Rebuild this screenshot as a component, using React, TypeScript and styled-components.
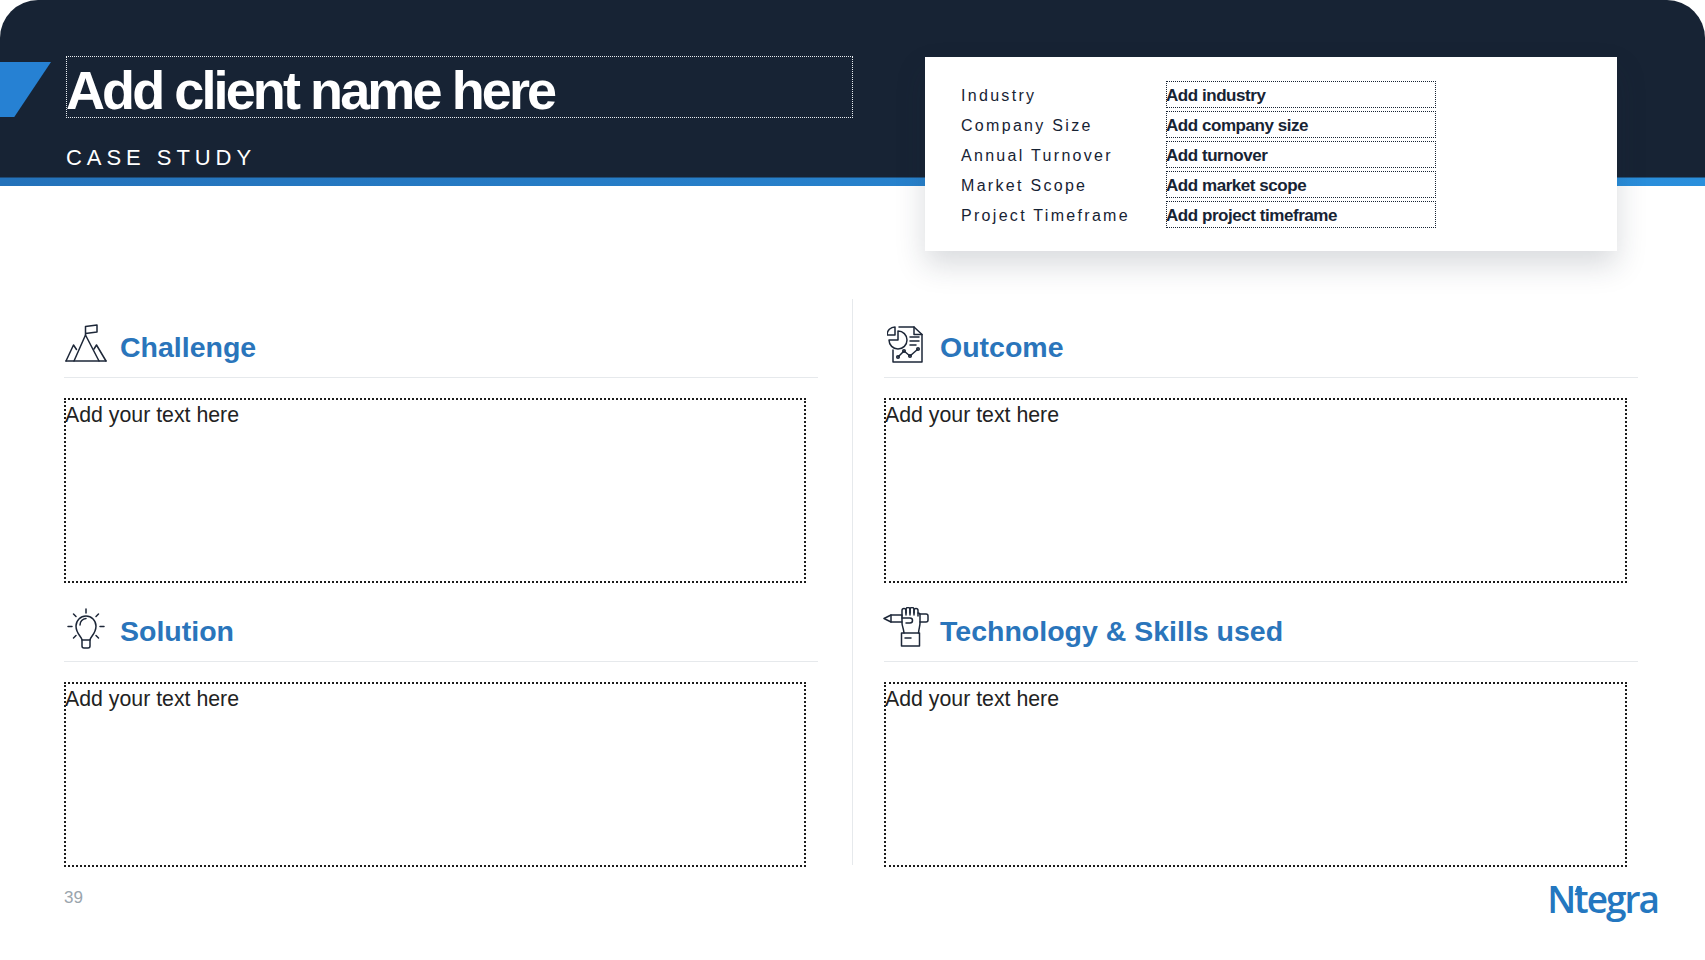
import * as React from 'react';
import styled, { createGlobalStyle } from 'styled-components';

const GlobalStyle = createGlobalStyle`
  html, body {
    margin: 0;
    padding: 0;
    background: #fff;
  }
  * {
    box-sizing: border-box;
  }
`;

const Page = styled.div`
  display: flex;
  flex-direction: column;
  width: 1705px;
  height: 960px;
  overflow: hidden;
  background: #fff;
  color: #172334;
  font-family: 'Liberation Sans', Arial, sans-serif;
`;

// dark band and the blue stripe under it are one element
const Header = styled.header`
  display: flex;
  align-items: flex-start;
  flex: none;
  height: 186px;
  padding-top: 56px;
  border-radius: 38px 38px 0 0;
  background:
    linear-gradient(#172334, #172334) top / 100% 177.500px no-repeat,
    linear-gradient(90deg, #2472ba, #2a8fdc);
`;

const TitleColumn = styled.div`
  display: flex;
  flex-direction: column;
  flex: none;
  width: 853px;
`;

const TitleRow = styled.div`
  display: flex;
  gap: 16px;
`;

const Wedge = styled.div`
  flex: none;
  width: 51px;
  height: 55px;
  margin-top: 6px;
  background: #2681d3;
  clip-path: polygon(0 0, 100% 0, 28% 100%, 0 100%);
`;

const TitleBox = styled.div`
  flex: 1;
  height: 62px;
  margin-left: -1px;
  border: 1px dotted #e8ecf0;
`;

const Title = styled.h1`
  margin: 0 0 0 -1px;
  color: #fff;
  font-size: 54px;
  font-weight: 700;
  line-height: 66px;
  letter-spacing: -2.900px;
  white-space: nowrap;
`;

const Subtitle = styled.div`
  margin: 27px 0 0 66px;
  color: #fff;
  font-size: 22px;
  line-height: 26px;
  letter-spacing: 4.950px;
`;

const InfoCard = styled.aside`
  display: flex;
  flex-direction: column;
  flex: none;
  gap: 3px;
  width: 692px;
  height: 194px;
  margin: 1px 0 0 72px;
  padding: 24px 36px;
  background: #fff;
  box-shadow: 0 14px 28px rgba(30, 40, 60, 0.17);
`;

const InfoRow = styled.div`
  display: grid;
  grid-template-columns: 205px 270px;
  align-items: center;
  height: 27px;
`;

const InfoLabel = styled.span`
  padding-top: 2px;
  font-size: 16px;
  letter-spacing: 2.300px;
  white-space: nowrap;
`;

const InfoValue = styled.span`
  height: 27px;
  border: 1px dotted #172334;
  font-size: 17px;
  font-weight: 700;
  line-height: 27px;
  letter-spacing: -0.450px;
  text-indent: -1px;
  white-space: nowrap;
`;

const Main = styled.main`
  display: grid;
  grid-template-columns: 788px 32px 754px;
  align-items: start;
  margin-top: 113px;
  padding-left: 64px;
`;

const Column = styled.div`
  display: flex;
  flex-direction: column;
`;

const Divider = styled.div`
  width: 1px;
  height: 566px;
  background: #e6e9ec;
`;

const Section = styled.section`
  display: flex;
  flex-direction: column;
  width: 754px;
`;

const SectionHeading = styled.div`
  display: flex;
  align-items: flex-end;
  height: 79px;
  margin-bottom: 20px;
  padding-bottom: 12px;
  border-bottom: 1px solid #e6e9ec;
`;

// lift and offset place each icon on the heading line, the drawings differ in size
const IconSlot = styled.div<{ $lift: number; $offset: number }>`
  display: flex;
  align-items: flex-end;
  flex: none;
  width: 56px;
  height: 44px;
  padding-bottom: ${props => props.$lift}px;
  padding-left: ${props => Math.max(props.$offset, 0)}px;
  margin-left: ${props => Math.min(props.$offset, 0)}px;
  margin-right: ${props => -Math.min(props.$offset, 0)}px;
`;

const SectionTitle = styled.h2`
  margin: 0;
  color: #2a75bb;
  font-size: 28.500px;
  font-weight: 700;
  line-height: 36px;
  white-space: nowrap;
`;

const TextBox = styled.div<{ $wide?: boolean }>`
  width: ${props => (props.$wide ? '743px' : '742px')};
  height: 185px;
  border: 2px dotted #1c1c1c;
  color: #222;
  font-size: 21.300px;
  line-height: 30px;
  text-indent: -1px;
`;

const Footer = styled.footer`
  display: flex;
  align-items: flex-start;
  justify-content: space-between;
  margin-top: 13px;
  padding: 0 47px 0 64px;
`;

const PageNumber = styled.span`
  margin-top: 8px;
  color: #9aa5ad;
  font-size: 17px;
  line-height: 20px;
`;

const Logo = styled.div`
  position: relative;
  color: #2477c0;
  font-family: 'Open Sans', 'Liberation Sans', sans-serif;
  font-size: 37px;
  font-weight: 600;
  line-height: 38px;
  letter-spacing: -2px;

  &::after {
    content: '';
    position: absolute;
    top: 6px;
    left: 29px;
    width: 4px;
    height: 6px;
    background: #2477c0;
    transform: skewX(-20deg);
  }
`;

const IconLine = styled.svg.attrs({
  fill: 'none',
  stroke: '#1d2738',
  strokeWidth: 1.5,
  strokeLinecap: 'round',
  strokeLinejoin: 'round',
})``;

function MountainIcon() {
  return (
    <IconLine width="42" height="38" viewBox="0 0 42 38">
      <path d="M1 37h40" />
      <path d="M9 37 20.500 11 34 37" />
      <path d="M1 37 8.500 21l3 4.500" />
      <path d="M29 25l2.500-4L41 37" />
      <path d="M20.500 11V2.500L32 1v7l-11.500 1.500" />
    </IconLine>
  );
}

function ReportIcon() {
  return (
    <IconLine width="36" height="37" viewBox="0 0 36 37">
      <path d="M12 1h15l8 7.500V36H6V24" />
      <path d="M27 1v7.500h8" />
      <path d="M11 5a9 9 0 1 1-9 9h9z" />
      <path d="M8 1a8 8 0 0 0-8 8h8z" />
      <path d="M23 11h9M23 15h9M23 19h6" />
      <path d="M11 31l6-6 6 5 8-7" />
      <circle cx="11" cy="31" r="1.300" />
      <circle cx="17" cy="25" r="1.300" />
      <circle cx="23" cy="30" r="1.300" />
      <circle cx="31" cy="23" r="1.300" />
    </IconLine>
  );
}

function BulbIcon() {
  return (
    <IconLine width="38" height="41" viewBox="0 0 38 41">
      <path d="M19 1v4M1 18.500h4M33 18.500h4M6.500 6l2.500 2.500M31.500 6 29 8.500M6.500 30l2.500-2.500M31.500 30 29 27.500" />
      <path d="M15 32c0-3-6-6-6-14a10 10 0 0 1 20 0c0 8-6 11-6 14z" />
      <path d="M13 17a6.500 6.500 0 0 1 6-6.500" />
      <path d="M15 32v6a2 2 0 0 0 2 2h4a2 2 0 0 0 2-2v-6" />
    </IconLine>
  );
}

function HandPenIcon() {
  return (
    <IconLine width="46" height="40" viewBox="0 0 46 40" strokeWidth="1.700">
      <path d="M19 8H8L1 11.500 8 15h11" />
      <path d="M8 8v7" />
      <path d="M37 7h6a2 2 0 0 1 2 2v4a2 2 0 0 1-2 2h-6" />
      <path d="M19 9V3.500a2 2 0 0 1 4 0V8" />
      <path d="M23 6V2.500a2 2 0 0 1 4 0V8" />
      <path d="M27 6V2.500a2 2 0 0 1 4 0V8" />
      <path d="M31 6V3.500a2 2 0 0 1 4 0V9" />
      <path d="M35 6a2 2 0 0 1 2 2v8c0 3-1 5-1.500 10" />
      <path d="M19 9v7c0 3 1.500 5 2 10" />
      <path d="M19 11h8a2 2 0 0 1 0 5h-4" />
      <path d="M18.500 26h18v13h-18z" />
      <path d="M22 31h6" />
    </IconLine>
  );
}

const infoRows = [
  { label: 'Industry', value: 'Add industry' },
  { label: 'Company Size', value: 'Add company size' },
  { label: 'Annual Turnover', value: 'Add turnover' },
  { label: 'Market Scope', value: 'Add market scope' },
  { label: 'Project Timeframe', value: 'Add project timeframe' },
];

function CaseSection({
  icon,
  title,
  lift,
  offset,
  wide,
}: {
  icon: React.ReactNode;
  title: string;
  lift: number;
  offset: number;
  wide?: boolean;
}) {
  return (
    <Section>
      <SectionHeading>
        <IconSlot $lift={lift} $offset={offset}>
          {icon}
        </IconSlot>
        <SectionTitle>{title}</SectionTitle>
      </SectionHeading>
      <TextBox $wide={wide}>Add your text here</TextBox>
    </Section>
  );
}

export default function App() {
  return (
    <Page>
      <GlobalStyle />
      <Header>
        <TitleColumn>
          <TitleRow>
            <Wedge />
            <TitleBox>
              <Title>Add client name here</Title>
            </TitleBox>
          </TitleRow>
          <Subtitle>CASE STUDY</Subtitle>
        </TitleColumn>
        <InfoCard>
          {infoRows.map(row => (
            <InfoRow key={row.label}>
              <InfoLabel>{row.label}</InfoLabel>
              <InfoValue>{row.value}</InfoValue>
            </InfoRow>
          ))}
        </InfoCard>
      </Header>
      <Main>
        <Column>
          <CaseSection icon={<MountainIcon />} title="Challenge" lift={3} offset={1} />
          <CaseSection icon={<BulbIcon />} title="Solution" lift={0} offset={3} />
        </Column>
        <Divider />
        <Column>
          <CaseSection icon={<ReportIcon />} title="Outcome" lift={2} offset={3} wide />
          <CaseSection icon={<HandPenIcon />} title="Technology & Skills used" lift={2} offset={-1} wide />
        </Column>
      </Main>
      <Footer>
        <PageNumber>39</PageNumber>
        <Logo>Ntegra</Logo>
      </Footer>
    </Page>
  );
}
